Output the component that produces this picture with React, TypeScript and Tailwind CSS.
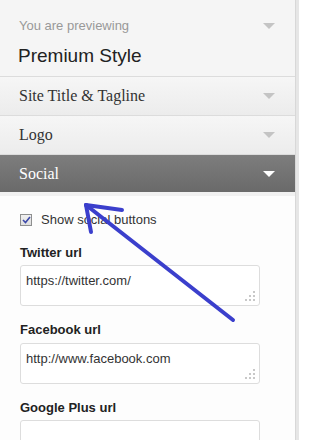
import type { ReactNode } from "react";

const sans = { fontFamily: '"Liberation Sans", Arial, sans-serif' };
const serif = { fontFamily: '"Liberation Serif", Georgia, serif' };

function Caret({ light = false }: { light?: boolean }) {
  return (
    <svg width="12" height="6" viewBox="0 0 12 6" className="shrink-0">
      <path d="M0 0 H12 L6 6 Z" fill={light ? "#ffffff" : "#c4c4c4"} />
    </svg>
  );
}

function Grip() {
  const dots = [
    [8, 0],
    [4, 4],
    [8, 4],
    [0, 8],
    [4, 8],
    [8, 8],
  ];
  return (
    <svg width="10" height="10" viewBox="0 0 10 10" className="absolute bottom-[4px] right-[4px]">
      {dots.map(([x, y]) => (
        <rect key={`${x}-${y}`} x={x} y={y} width="2" height="2" fill="#c8c8c8" />
      ))}
    </svg>
  );
}

function Section({ title, active = false }: { title: string; active?: boolean }) {
  return (
    <div
      className={
        active
          ? "flex h-[37px] shrink-0 items-center justify-between bg-gradient-to-b from-[#7d7d7d] to-[#6a6a6a] pl-[19px] pr-[20px] text-white"
          : "flex h-[39px] shrink-0 items-center justify-between border-b border-[#dcdcdc] bg-gradient-to-b from-[#f6f6f6] to-[#ececec] pl-[19px] pr-[20px] text-[#333]"
      }
      style={serif}
    >
      <span className="text-[16px]">{title}</span>
      <Caret light={active} />
    </div>
  );
}

function Field({ label, value, children }: { label: string; value?: string; children?: ReactNode }) {
  return (
    <div className="flex shrink-0 flex-col">
      <label className="text-[13px] font-bold text-[#222]">{label}</label>
      <div className="relative mt-[3px] h-[41px] w-[240px] shrink-0 rounded-[3px] border border-[#dddddd] bg-white px-[5px] pt-[5px] text-[13px] text-[#333]">
        {value}
        {children}
        <Grip />
      </div>
    </div>
  );
}

export default function App() {
  return (
    <div className="relative flex h-[440px] w-[310px] overflow-hidden bg-white" style={sans}>
      <div className="flex w-[296px] shrink-0 flex-col overflow-hidden border-r border-[#d8d8d8]">
        <div className="flex h-[77px] shrink-0 flex-col border-b border-[#dcdcdc] bg-[#f5f5f5] pl-[18px] pr-[20px] pt-[16px]">
          <div className="flex items-center justify-between">
            <span className="pl-px text-[13px] text-[#999]">You are previewing</span>
            <Caret />
          </div>
          <span className="mt-[6px] text-[19px] text-[#222]">Premium Style</span>
        </div>
        <Section title="Site Title & Tagline" />
        <Section title="Logo" />
        <Section title="Social" active />
        <div className="flex flex-1 shrink-0 flex-col border-t-[4px] border-[#f1f1f1] bg-[#fdfdfd] pl-[19px] pr-[8px]">
          <label className="mt-[14px] flex items-center gap-[9px] pl-px text-[13px] text-[#333]">
            <span className="flex h-[12px] w-[12px] items-center justify-center border border-[#8e8f8f] bg-gradient-to-b from-[#f0f0f0] to-[#dedede]">
              <svg width="9" height="8" viewBox="0 0 9 8">
                <path d="M1 4 L3.5 6.5 L8 1" stroke="#3b48a8" strokeWidth="1.6" fill="none" />
              </svg>
            </span>
            Show social buttons
          </label>
          <div className="mt-[13px] flex flex-col gap-[14px] pl-px">
            <Field label="Twitter url" value="https://twitter.com/" />
            <Field label="Facebook url" value="http://www.facebook.com" />
            <Field label="Google Plus url" />
          </div>
        </div>
      </div>
      <div className="w-[3px] shrink-0 bg-[#e6e6e6]" />
      <svg className="pointer-events-none absolute left-0 top-0" width="310" height="440">
        <g stroke="#3b3fcc" strokeWidth="4" strokeLinecap="round" fill="none">
          <path d="M86 205 L233 320" />
          <path d="M86 205 L122 210" />
          <path d="M86 205 L91 232" />
        </g>
      </svg>
    </div>
  );
}
